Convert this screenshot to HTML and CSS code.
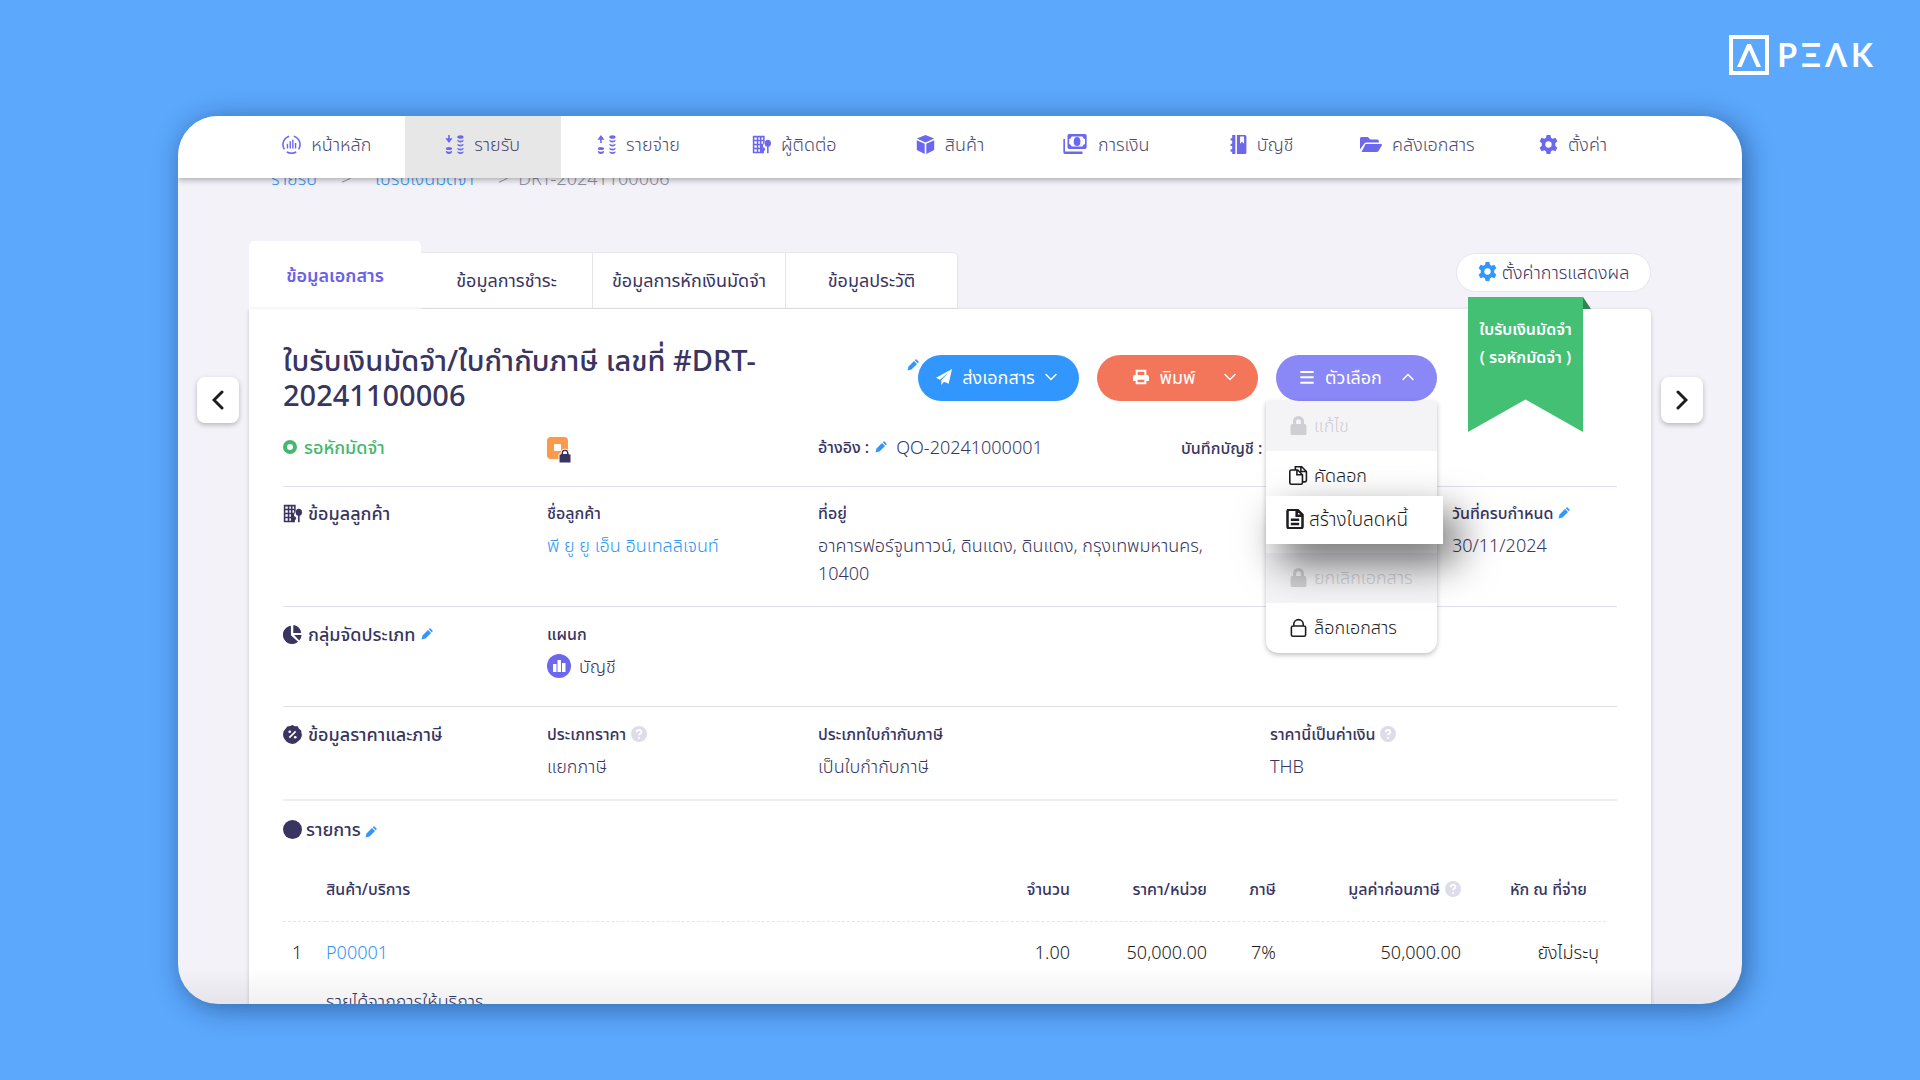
FILE: index.html
```html
<!DOCTYPE html>
<html lang="th">
<head>
<meta charset="utf-8">
<meta name="viewport" content="width=device-width, initial-scale=1">
<title>PEAK</title>
<link rel="stylesheet" href="styles.css">
</head>
<body>
<svg class="sprite" aria-hidden="true">
  <symbol id="i-pencil" viewBox="0 0 24 24"><path d="M1 23l2-8L14 4l6 6L9 21z"/><path d="M15.500 2.500l1.500-1.500q1-1 2 0l4 4q1 1 0 2l-1.500 1.500z"/></symbol>
  <symbol id="i-gear" viewBox="0 0 24 24"><path fill-rule="evenodd" d="M9.600 0h4.800l.8 3.600 2 1.200 3.600-1.200 2.400 4.400-2.700 2.400v3.200l2.700 2.400-2.400 4.400-3.600-1.200-2 1.200-.8 3.600H9.600l-.8-3.600-2-1.200-3.600 1.200L.8 16l2.700-2.400v-3.200L.8 8l2.400-4.400 3.600 1.200 2-1.200zM12 8a4 4 0 1 0 0 8 4 4 0 0 0 0-8z"/></symbol>
  <symbol id="i-building" viewBox="0 0 24 24"><path fill-rule="evenodd" d="M1 1h15v8l-2 4v10H1zM3 3v3h3V3zm5 0v3h2V3zm4 0v3h2V3zM3 8v3h3V8zm5 0v3h2V8zm4 0v3h2V8zM3 13v3h3v-3zm5 0v3h2v-3zm-5 5v3h3v-3zm5 0v3h2v-3z"/><ellipse cx="20" cy="10.500" rx="4" ry="4.500"/><path d="M19 13h2v10h-2z"/><circle cx="14" cy="18" r="2.500"/><path d="M13 19h2v4h-2z"/></symbol>
  <symbol id="i-help" viewBox="0 0 16 16"><circle cx="8" cy="8" r="8" fill="#dddce8"/><path d="M5.700 6.200c0-3 4.700-3 4.700-.2 0 1.700-2.400 1.700-2.400 3.300" fill="none" stroke="#fff" stroke-width="1.800"/><circle cx="8" cy="12" r="1.100" fill="#fff"/></symbol>
  <symbol id="i-lock" viewBox="0 0 24 24"><path fill-rule="evenodd" d="M5 10V7a7 7 0 0 1 14 0v3h1q2 0 2 2v10q0 2-2 2H4q-2 0-2-2V12q0-2 2-2zM9 10h6V7a3 3 0 0 0-6 0z"/></symbol>
  <symbol id="i-coins" viewBox="0 0 24 24"><ellipse cx="19.500" cy="2.500" rx="4" ry="2.300"/><path d="M15.500 6q4 2.500 8 0 0 3.500-4 3.500t-4-3.500zM15.500 11q4 2.500 8 0 0 3.500-4 3.500t-4-3.500zM15.500 16q4 2.500 8 0 0 3.500-4 3.500t-4-3.500zM15.500 20.500q4 2.500 8 0 0 3.500-4 3.500t-4-3.500z"/><ellipse cx="5" cy="17" rx="4" ry="2"/><path d="M1 20q4 2.500 8 0 0 4-4 4t-4-4z"/></symbol>
  <symbol id="i-down" viewBox="0 0 12 8"><path d="M1 1.500l5 5 5-5" fill="none" stroke="currentColor" stroke-width="1.500" stroke-linecap="round"/></symbol>
</svg>

<header class="brand">
  <svg class="brand-mark" viewBox="0 0 40 40" aria-hidden="true"><path d="M2 2h36v36H2z" fill="none" stroke="#fff" stroke-width="4"/><path d="M18.200 9h3.600L32 32h-4.500L20 15l-7.500 17H8z" fill="#fff"/></svg>
  <div class="brand-word"><span>P</span><span>Ξ</span><span>Λ</span><span>K</span></div>
</header>

<div class="window">
  <nav class="topnav">
    <a href="#"><svg class="ico" viewBox="0 0 24 24"><path d="M9 1.500A11 11 0 0 0 3 18M15 1.500A11 11 0 0 1 21 18M6 21.500q6 3 12 0" fill="none" stroke="currentColor" stroke-width="2"/><path d="M6 11h1.800v6H6zM9.500 8h1.800v9H9.500zM12.800 6h1.800v11h-1.800zM16.200 10h1.800v7h-1.800z"/></svg>หน้าหลัก</a>
    <a href="#" class="active"><svg class="ico" viewBox="0 0 24 24"><use href="#i-coins"/><path d="M4 0h2v4h3.500L5 10 .5 4H4z"/></svg>รายรับ</a>
    <a href="#"><svg class="ico" viewBox="0 0 24 24"><use href="#i-coins"/><path d="M4 10h2V6h3.500L5 0 .5 6H4z"/></svg>รายจ่าย</a>
    <a href="#"><svg class="ico"><use href="#i-building"/></svg>ผู้ติดต่อ</a>
    <a href="#"><svg class="ico" viewBox="0 0 24 24"><path d="M12 0l11 4.500-11 5-11-5zM1 6.500l10 4.600V24L1 19zM23 6.500l-10 4.600V24l10-5z"/></svg>สินค้า</a>
    <a href="#"><svg class="ico ico-wide" viewBox="0 0 28 24"><path fill-rule="evenodd" d="M7 0h19q2 0 2 2v14q0 2-2 2H7q-2 0-2-2V2q0-2 2-2zm3 3q-1 3-3 3v6q2 0 3 3h13q1-3 3-3V6q-2 0-3-3z"/><ellipse cx="16.500" cy="9" rx="4" ry="5.500"/><path d="M0 6h2v15h21v3H2q-2 0-2-2z"/></svg>การเงิน</a>
    <a href="#"><svg class="ico ico-slim" viewBox="0 0 20 24"><path fill-rule="evenodd" d="M8 0h10q2 0 2 2v20q0 2-2 2H8zm4 2v9l2.500-2.500L17 11V2z"/><path d="M2 0h4v24H2v-3H0v-3h2v-4H0v-3h2V7H0V4h2z"/></svg>บัญชี</a>
    <a href="#"><svg class="ico ico-folder" viewBox="0 3 28 19"><path d="M0 19V5q0-2 2-2h8l3 3h9q2 0 2 2v2H8q-2 0-3 2z"/><path d="M7 12h20q1 0 1 1l-4 7q-1 2-3 2H2z"/></svg>คลังเอกสาร</a>
    <a href="#"><svg class="ico"><use href="#i-gear"/></svg>ตั้งค่า</a>
  </nav>

  <div class="stage">
    <button class="pager" type="button" aria-label="ก่อนหน้า"><svg viewBox="0 0 12 20"><path d="M10 2l-8 8 8 8"/></svg></button>

    <main class="main">
      <div class="crumbs"><a href="#">รายรับ</a><span>&gt;</span><a href="#">ใบรับเงินมัดจำ</a><span class="crumb-last">&gt;</span><span>DRT-20241100006</span></div>

      <div class="tabbar">
        <div class="tabs">
          <button type="button" class="tab tab-on">ข้อมูลเอกสาร</button>
          <button type="button" class="tab">ข้อมูลการชำระ</button>
          <button type="button" class="tab tab-wide">ข้อมูลการหักเงินมัดจำ</button>
          <button type="button" class="tab tab-last">ข้อมูลประวัติ</button>
        </div>
        <button type="button" class="display-btn"><svg class="ico"><use href="#i-gear"/></svg>ตั้งค่าการแสดงผล</button>
      </div>

      <article class="card">
        <div class="ribbon"><p>ใบรับเงินมัดจำ</p><p>( รอหักมัดจำ )</p></div>

        <div class="head">
          <h1>ใบรับเงินมัดจำ/ใบกำกับภาษี เลขที่ #DRT-20241100006</h1>
          <svg class="pencil"><use href="#i-pencil"/></svg>
          <div class="actions">
            <button type="button" class="pill blue"><svg class="ico" viewBox="0 0 24 24"><path d="M24 0L0 13l6 3L19 5 8 17v7l4-5 7 3z"/></svg>ส่งเอกสาร<svg class="chev"><use href="#i-down"/></svg></button>
            <button type="button" class="pill coral"><svg class="ico" viewBox="0 0 24 24"><path fill-rule="evenodd" d="M4 1h16v8h1q3 0 3 3v6h-4v5H4v-5H0v-6q0-3 3-3h1zm3 3v5h10V4zm0 12v4h10v-4z"/></svg>พิมพ์<svg class="chev"><use href="#i-down"/></svg></button>
            <div class="options">
              <button type="button" class="pill violet" aria-expanded="true"><svg class="ico" viewBox="0 0 24 24"><path d="M2 3h20v3H2zM2 11h20v3H2zM2 19h20v3H2z"/></svg>ตัวเลือก<svg class="chev flip"><use href="#i-down"/></svg></button>
              <div class="menu">
                <button type="button" disabled><svg class="ico"><use href="#i-lock"/></svg>แก้ไข</button>
                <button type="button"><svg class="ico line" viewBox="0 0 24 24"><path d="M8 5V1h8l6 6v11q0 2-2 2h-3M1 7q0-2 2-2h8l6 6v10q0 2-2 2H3q-2 0-2-2zM10 5v6h7M15 1v6h7"/></svg>คัดลอก</button>
                <div class="slot"><button type="button" class="raised"><svg class="ico line bold" viewBox="0 0 24 24"><path d="M3 3q0-2 2-2h10l6 6v14q0 2-2 2H5q-2 0-2-2zM14 1v7h7M7 13h10M7 18h10"/></svg>สร้างใบลดหนี้</button></div>
                <button type="button" disabled><svg class="ico"><use href="#i-lock"/></svg>ยกเลิกเอกสาร</button>
                <button type="button"><svg class="ico line" viewBox="0 0 24 24"><path d="M3 12q0-2 2-2h14q2 0 2 2v9q0 2-2 2H5q-2 0-2-2zM6 10V8a6 6 0 0 1 12 0v2"/></svg>ล็อกเอกสาร</button>
              </div>
            </div>
          </div>
        </div>

        <section class="grid status">
          <div class="state">รอหักมัดจำ</div>
          <svg class="stamp" viewBox="0 0 24 26" aria-hidden="true"><rect width="21" height="22" rx="4" fill="#fc9a4c"/><rect x="7" y="7" width="7" height="7" rx="1" fill="#fff"/><path d="M14 17v-1a4 4 0 0 1 8 0v1h2v9H12v-9z" fill="#383561" stroke="#fff" stroke-width="1"/><path d="M16 17v-1a2 2 0 0 1 4 0v1z" fill="#fff"/></svg>
          <div class="ref"><b>อ้างอิง :</b><svg class="pencil"><use href="#i-pencil"/></svg><span>QO-20241000001</span></div>
          <div class="entry"><b>บันทึกบัญชี :</b></div>
        </section>

        <section class="grid customer">
          <h2><svg class="ico"><use href="#i-building"/></svg>ข้อมูลลูกค้า</h2>
          <dl><dt>ชื่อลูกค้า</dt><dd><a href="#">พี ยู ยู เอ็น อินเทลลิเจนท์</a></dd></dl>
          <dl><dt>ที่อยู่</dt><dd class="address">อาคารฟอร์จูนทาวน์, ดินแดง, ดินแดง, กรุงเทพมหานคร,<br>10400</dd></dl>
          <dl class="due"><dt>วันที่ครบกำหนด<svg class="pencil"><use href="#i-pencil"/></svg></dt><dd>30/11/2024</dd></dl>
        </section>

        <section class="grid group">
          <h2><svg class="ico" viewBox="0 0 24 24"><path d="M10 1v12l9 8A11.500 11.500 0 1 1 10 1z"/><path d="M13 0a11 11 0 0 1 10 10H13zM14 12.500h9.500a11 11 0 0 1-3 7z"/></svg>กลุ่มจัดประเภท<svg class="pencil"><use href="#i-pencil"/></svg></h2>
          <dl><dt>แผนก</dt><dd class="dept"><svg class="ico-lg" viewBox="0 0 24 24"><circle cx="12" cy="12" r="12" fill="#6b68ee"/><path d="M6 10h3.500v8H6zM10.500 6h3.500v12h-3.500zM15 9h3.500v9H15z" fill="#fff"/></svg>บัญชี</dd></dl>
        </section>

        <section class="grid price">
          <h2><svg class="ico" viewBox="0 0 24 24"><path d="M12 0l3 1.500 3.500.2 1.700 3L23 7l.3 3.500L24 12l-.7 3L22 18l-3 2.500L16 23l-4 1-4-1-3-1.500L2 18 .5 15 0 12l.7-4L3 5l2.500-3L9 1.200z"/><path d="M8 16l8-8" stroke="#fff" stroke-width="2"/><circle cx="8.500" cy="8.500" r="1.700" fill="#fff"/><circle cx="15.500" cy="15.500" r="1.700" fill="#fff"/></svg>ข้อมูลราคาและภาษี</h2>
          <dl><dt>ประเภทราคา<svg class="help"><use href="#i-help"/></svg></dt><dd>แยกภาษี</dd></dl>
          <dl><dt>ประเภทใบกำกับภาษี</dt><dd>เป็นใบกำกับภาษี</dd></dl>
          <dl class="currency"><dt>ราคานี้เป็นค่าเงิน<svg class="help"><use href="#i-help"/></svg></dt><dd>THB</dd></dl>
        </section>

        <section class="items">
          <h2><svg class="ico" viewBox="0 0 24 24"><circle cx="12" cy="12" r="12"/></svg>รายการ<svg class="pencil"><use href="#i-pencil"/></svg></h2>
          <table>
            <colgroup><col class="c-no"><col><col class="c-qty"><col class="c-unit"><col class="c-tax"><col class="c-amt"><col class="c-wht"></colgroup>
            <thead><tr><th></th><th>สินค้า/บริการ</th><th class="num">จำนวน</th><th class="num">ราคา/หน่วย</th><th class="num">ภาษี</th><th class="num">มูลค่าก่อนภาษี<svg class="help"><use href="#i-help"/></svg></th><th class="num last">หัก ณ ที่จ่าย</th></tr></thead>
            <tbody>
              <tr><td class="no">1</td><td><a href="#">P00001</a></td><td class="num">1.00</td><td class="num">50,000.00</td><td class="num">7%</td><td class="num">50,000.00</td><td class="num last">ยังไม่ระบุ</td></tr>
              <tr class="desc"><td></td><td colspan="6">รายได้จากการให้บริการ</td></tr>
            </tbody>
          </table>
        </section>
      </article>
    </main>

    <button class="pager" type="button" aria-label="ถัดไป"><svg viewBox="0 0 12 20"><path d="M2 2l8 8-8 8"/></svg></button>
  </div>
</div>
</body>
</html>
```
FILE: styles.css
```css
*, *::before { box-sizing: border-box; }

body {
  margin: 0;
  height: 100vh;
  padding: 34px 178px 76px;
  display: flex;
  flex-direction: column;
  background: #5ba8fd;
  color: #383561;
  font-family: "Noto Sans", "Noto Sans Thai", "Open Sans", sans-serif;
  font-size: 18px;
  font-weight: 350;
  line-height: 28px;
}

h1, h2, p, dl, dd { margin: 0; }
h2, th, b, dt { font-weight: 500; }
a { color: #3296f5; text-decoration: none; }
button { font: inherit; color: inherit; border: 0; padding: 0; background: none; cursor: pointer; }
svg { flex: none; fill: currentColor; }

.sprite { position: absolute; width: 0; height: 0; }
.ico { width: 19px; height: 19px; }
.ico-wide { width: 26px; height: 20px; }
.ico-slim { width: 17px; height: 19px; }
.ico-folder { width: 22px; height: 15px; }
.ico-lg { width: 24px; height: 24px; }
.pencil { width: 12px; height: 12px; color: #3296ff; }
.help { width: 16px; height: 16px; }
.line { fill: none; stroke: currentColor; stroke-width: 2; }
.bold { stroke-width: 3; }

/* Brand */
.brand {
  display: flex;
  justify-content: flex-end;
  align-items: center;
  gap: 8px;
  height: 42px;
  margin-right: -131px;
  margin-bottom: 40px;
  color: #fff;
}
.brand-mark { width: 40px; height: 40px; }
.brand-word {
  display: flex;
  gap: 4px;
  font-family: Lato, sans-serif;
  font-size: 32px;
  font-weight: 700;
  line-height: 40px;
}

/* Window */
.window {
  position: relative;
  flex: 1;
  min-height: 0;
  overflow: hidden;
  border-radius: 40px;
  background: #f3f2f8;
  box-shadow: 4px 4px 28px rgba(0, 20, 60, .45);
}
.window::after {
  content: "";
  position: absolute;
  inset: auto 0 0;
  height: 36px;
  background: linear-gradient(transparent, rgba(0, 0, 0, .06));
  pointer-events: none;
}

.topnav {
  position: relative;
  z-index: 1;
  display: grid;
  grid-template-columns: repeat(9, 1fr);
  height: 62px;
  padding: 0 91px 0 71px;
  background: #fff;
  box-shadow: 0 2px 6px rgba(0, 0, 0, .3);
}
.topnav a {
  display: flex;
  justify-content: center;
  align-items: center;
  gap: 10px;
  padding-bottom: 6px;
  color: #4d4a70;
}
.topnav .active { background: #e7e7e7; }
.topnav .ico { color: #6b68ee; }

.stage {
  display: flex;
  align-items: flex-start;
  gap: 10px;
  margin-top: -14px;
  padding: 0 39px 0 19px;
}
.pager {
  display: grid;
  place-items: center;
  width: 42px;
  height: 46px;
  margin-top: 213px;
  border-radius: 8px;
  background: #fff;
  box-shadow: 0 2px 5px rgba(0, 0, 0, .25);
}
.pager svg { width: 12px; height: 20px; fill: none; stroke: #1d1d20; stroke-width: 3; stroke-linecap: round; }
.main { flex: 1; min-width: 0; }

.crumbs { display: flex; height: 28px; padding-left: 22px; color: #8f8ea0; }
.crumbs span { margin-left: 26px; }
.crumbs a + span, .crumbs span + a { margin-left: 24px; }
.crumbs .crumb-last + span { margin-left: 10px; }

/* Tabs */
.tabbar { display: flex; justify-content: space-between; align-items: flex-end; height: 117px; }
.tabs { display: flex; align-items: flex-end; font-weight: 400; }
.tab {
  width: 172px;
  height: 57px;
  padding-bottom: 2px;
  border: 1px solid #e6e5ee;
  border-left: 0;
  background: #fff;
}
.tab-wide { width: 193px; }
.tab-last { border-radius: 0 5px 0 0; }
.tab-on {
  height: 68px;
  padding: 0;
  border: 0;
  border-radius: 5px 5px 0 0;
  color: #6b60e8;
  font-weight: 600;
}
.display-btn {
  display: flex;
  justify-content: center;
  align-items: center;
  gap: 5px;
  width: 195px;
  height: 39px;
  margin-bottom: 17px;
  padding-bottom: 2px;
  border: 1px solid #e6e5ee;
  border-radius: 20px;
  background: #fff;
}
.display-btn .ico { color: #3296ff; }

/* Document card */
.card {
  position: relative;
  min-height: 740px;
  padding: 33px 34px 0;
  border-radius: 0 5px 0 0;
  background: #fff;
  box-shadow: 0 1px 4px rgba(0, 0, 0, .18);
}
.ribbon {
  position: absolute;
  top: -12px;
  right: 68px;
  width: 115px;
  height: 135px;
  padding-top: 18px;
  background: #44c074;
  clip-path: polygon(0 0, 100% 0, 100% 100%, 50% 76%, 0 100%);
  color: #fff;
  font-size: 16px;
  font-weight: 600;
  text-align: center;
  white-space: nowrap;
}
.card::before {
  content: "";
  position: absolute;
  top: -12px;
  right: 60px;
  width: 8px;
  height: 12px;
  background: #2f8553;
  clip-path: polygon(0 0, 100% 100%, 0 100%);
}

.head { display: flex; align-items: flex-start; height: 82px; padding-right: 180px; }
.head h1 { flex: 1; padding-right: 60px; font-size: 29px; font-weight: 500; line-height: 35px; }
.head > .pencil { margin-top: 17px; }
.actions { display: flex; gap: 18px; margin: 13px 0 0 -1px; }
.pill {
  display: flex;
  justify-content: center;
  align-items: center;
  gap: 10px;
  width: 161px;
  height: 46px;
  padding-bottom: 2px;
  border-radius: 23px;
  color: #fff;
  font-weight: 400;
  white-space: nowrap;
}
.pill .ico { width: 16px; height: 16px; }
.chev { width: 12px; height: 8px; }
.flip { transform: rotate(180deg); }
.blue { padding-right: 4px; background: #3296ff; }
.coral { background: #f3755a; }
.coral .ico { margin-left: 14px; }
.coral .chev { margin-left: 18px; }
.violet .chev { margin-left: 10px; }
.violet { background: #8a87f6; }

.options { position: relative; }
.menu {
  position: absolute;
  z-index: 2;
  top: 46px;
  right: 0;
  width: 171px;
  overflow: visible;
  border-radius: 0 0 12px 12px;
  background: #fff;
  box-shadow: 0 2px 5px rgba(0, 0, 0, .25);
  color: #1d1d20;
}
.menu button {
  display: flex;
  align-items: center;
  gap: 6px;
  width: 100%;
  height: 50px;
  padding: 0 0 2px 23px;
  white-space: nowrap;
}
.menu button:disabled { background: #f4f4f7; color: #cfcfd3; }
.menu .slot { height: 52px; }
.menu .raised {
  position: absolute;
  z-index: 1;
  top: 95px;
  left: 0;
  width: 177px;
  height: 48px;
  padding: 0 0 2px 19px;
  gap: 4px;
  background: #fff;
  box-shadow: 14px 18px 40px rgba(0, 0, 0, .6);
  font-size: 19px;
}
.menu .raised .ico { width: 20px; height: 20px; }

/* Information sections */
.grid {
  display: grid;
  grid-template-columns: 264px 271px 363px 89px 182px 1fr;
  border-bottom: 1px solid #e2e1ea;
}
.status { height: 63px; padding-top: 9px; }
.state { display: flex; align-items: center; gap: 7px; height: 28px; color: #44b86e; font-weight: 500; }
.state::before { content: ""; width: 14px; height: 14px; border: 4px solid #44b86e; border-radius: 50%; }
.stamp { width: 24px; height: 26px; margin-top: 4px; }
.ref { display: flex; align-items: center; gap: 6px; height: 28px; }
.ref span { margin-left: 3px; }
.entry { white-space: nowrap; }
b, dt, th { font-size: 16px; }

.grid h2, .items h2 { display: flex; align-items: center; gap: 6px; height: 28px; font-size: 18px; }
.items h2 { gap: 4px; }
.items h2 .pencil { margin-top: 6px; }
.customer { height: 120px; padding-top: 12px; }
.group { height: 100px; padding-top: 13px; }
.price { height: 94px; padding-top: 13px; border-bottom-width: 2px; border-color: #efeff2; }
dt { display: flex; align-items: center; gap: 5px; height: 28px; margin-bottom: 4px; }
.address { white-space: nowrap; }
.due { grid-column: 5; margin-left: 182px; white-space: nowrap; }
.currency { grid-column: 4; margin-left: 89px; white-space: nowrap; }
.dept { display: flex; align-items: center; gap: 8px; }

.items { padding: 14px 11px 0 0; }
table { width: 100%; margin-top: 14px; border-collapse: collapse; table-layout: fixed; color: #1d1d20; }
.c-no { width: 43px; }
.c-qty { width: 100px; }
.c-unit { width: 137px; }
.c-tax { width: 69px; }
.c-amt { width: 185px; }
.c-wht { width: 145px; }
th { height: 64px; padding: 0; border-bottom: 1px dashed #e6e6ea; color: #383561; text-align: left; white-space: nowrap; }
th .help { margin-left: 5px; vertical-align: -2px; }
td { height: 62px; padding: 0; }
.no { padding-left: 9px; }
.num { text-align: right; }
td.last { padding-right: 7px; }
th.last { padding-right: 19px; }
.desc td { height: 36px; color: #383561; }
```
